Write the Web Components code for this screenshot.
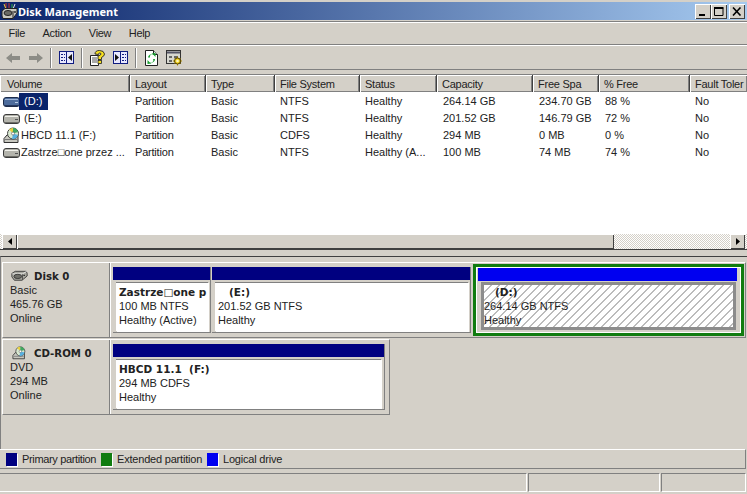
<!DOCTYPE html>
<html><head><meta charset="utf-8"><style>
html,body{margin:0;padding:0;background:#d4d0c8}
body{width:747px;height:494px;overflow:hidden;font:11px "Liberation Sans",Arial,sans-serif;color:#000;display:flex;flex-direction:column}
</style></head><body>
<dm-title>Disk Management</dm-title>
<dm-menu><span>File</span><span>Action</span><span>View</span><span>Help</span></dm-menu>
<dm-toolbar></dm-toolbar>
<dm-list>
<dm-row icon="blue" selected data-c=" (D:)|Partition|Basic|NTFS|Healthy|264.14 GB|234.70 GB|88 %|No"></dm-row>
<dm-row icon="gray" data-c=" (E:)|Partition|Basic|NTFS|Healthy|201.52 GB|146.79 GB|72 %|No"></dm-row>
<dm-row icon="cd" data-c="HBCD 11.1 (F:)|Partition|Basic|CDFS|Healthy|294 MB|0 MB|0 %|No"></dm-row>
<dm-row icon="gray" data-c="Zastrze□one przez ...|Partition|Basic|NTFS|Healthy (A...|100 MB|74 MB|74 %|No"></dm-row>
</dm-list>
<dm-hscroll></dm-hscroll>
<dm-lower>
<dm-disk name="Disk 0" icon="hdd" l1="Basic" l2="465.76 GB" l3="Online">
<dm-part w="98"><b>Zastrze□one p</b><span>100 MB NTFS</span><span>Healthy (Active)</span></dm-part>
<dm-part w="259"><b>&nbsp;&nbsp;&nbsp;(E:)</b><span>201.52 GB NTFS</span><span>Healthy</span></dm-part>
<dm-part w="271" logical><b>&nbsp;&nbsp;&nbsp;(D:)</b><span>264.14 GB NTFS</span><span>Healthy</span></dm-part>
</dm-disk>
<dm-disk name="CD-ROM 0" icon="cd" l1="DVD" l2="294 MB" l3="Online" style="width:388px">
<dm-part w="272" class="wide"><b>HBCD 11.1&nbsp;&nbsp;(F:)</b><span>294 MB CDFS</span><span>Healthy</span></dm-part>
</dm-disk>
</dm-lower>
<dm-legend></dm-legend>
<dm-status></dm-status>
<script>
const ICONS={
blue:`<svg width="18" height="14" viewBox="0 0 18 14"><rect x="0.5" y="2.5" width="16" height="9" rx="2.5" fill="#4d6c9c" stroke="#1d2c4a"/><path d="M2 4.500h13" stroke="#9db4d8"/><path d="M2 10.500h13" stroke="#24365c"/><rect x="12" y="7" width="3" height="1" fill="#b8cbe6"/></svg>`,
gray:`<svg width="18" height="14" viewBox="0 0 18 14"><rect x="0.5" y="2.5" width="16" height="9" rx="2.5" fill="#b4b4ac" stroke="#3c3c3c"/><path d="M2 4.500h13" stroke="#f2f2ec"/><path d="M2 10.500h13" stroke="#6c6c66"/><rect x="12" y="7" width="3" height="1" fill="#555"/></svg>`,
cd:`<svg width="18" height="17" viewBox="0 0 18 17"><path d="M1 11.500 4 8h11v7.500H1z" fill="#c8c8c0" stroke="#333"/><path d="M2 12.500h12" stroke="#777"/><circle cx="10" cy="6.500" r="5.500" fill="#d8e8d0" stroke="#444"/><path d="M10 6.500 6 2.500A5.500 5.500 0 0 1 10 1z" fill="#e8d040"/><path d="M10 6.500 15 5A5.500 5.500 0 0 0 10 1z" fill="#3fa860"/><path d="M10 6.500 9 12A5.500 5.500 0 0 0 15 8z" fill="#58b0e0"/><circle cx="10" cy="6.500" r="1.500" fill="#fff" stroke="#555" stroke-width=".6"/></svg>`,
hdd:`<svg width="20" height="14" viewBox="0 0 20 14"><path d="M1 4 5 1.500h13L19 4v3l-6 5H4L1 8z" fill="#a8a8a0" stroke="#333"/><path d="M1.500 4.500h12l5-3" fill="none" stroke="#eee"/><path d="M13.500 5v6.500" stroke="#444"/><ellipse cx="8" cy="7.500" rx="4.500" ry="2.500" fill="#70706a" stroke="#333"/><rect x="14.500" y="5.500" width="2" height="1.500" fill="#333"/></svg>`,
title:`<svg width="17" height="17" viewBox="0 0 17 17"><path d="M5 0v6M8 0v6" stroke="#d03030" stroke-width="1"/><path d="M11 1v5" stroke="#30b040"/><path d="M3 1l2 5" stroke="#e8d040"/><path d="M14 1l-2 5" stroke="#e8e8e0"/><path d="M1 8 4 5.500h12V10l-4 5.500H2L1 13z" fill="#c8c8c0" stroke="#222"/><ellipse cx="7" cy="10" rx="4" ry="2.500" fill="#6a6a64" stroke="#222"/><path d="M12 8v7" stroke="#222"/><rect x="13" y="8" width="2" height="2" fill="#555"/></svg>`
};
function def(name,css,html,init){customElements.define(name,class extends HTMLElement{
connectedCallback(){if(this.shadowRoot)return;const s=this.attachShadow({mode:'open'});s.innerHTML=`<style>${css}</style>`+(typeof html==='function'?html(this):html);if(init)init(this,s);}});}

def('dm-title',`:host{display:flex;align-items:center;height:18px;margin-top:2px;padding:0 2px 0 1px;background:linear-gradient(90deg,#0a246a,#a6caf0);color:#fff;font:bold 11px "Noto Sans",sans-serif;flex:none}
svg{flex:none;display:block}.t{flex:1}
.b{width:16px;height:15px;background:#d4d0c8;box-shadow:inset 1px 1px #fff,inset -1px -1px #404040;display:flex;align-items:center;justify-content:center;flex:none}`,
()=>`${ICONS.title}<div class="t"><slot></slot></div>
<div class="b"><svg width="10" height="9" viewBox="0 0 10 9"><path d="M1 7h6v2H1z"/></svg></div>
<div class="b"><svg width="10" height="9" viewBox="0 0 10 9"><path d="M.5 1.500h8.500v7h-8.500z" fill="none" stroke="#000"/><path d="M0 1h9.500" stroke="#000" stroke-width="2"/></svg></div>
<div class="b" style="margin-left:2px"><svg width="10" height="9" viewBox="0 0 10 9"><path d="M1 .5 8.500 8.500M8.500.5 1 8.500" stroke="#000" stroke-width="1.600"/></svg></div>`);

def('dm-menu',`:host{display:flex;flex:none;height:22px;margin-top:1px;padding:0 0 0 8.500px;gap:17.500px;align-items:center;border-top:1px solid #808080;box-shadow:inset 0 1px #fff;border-bottom:1px solid #808080;color:#222;letter-spacing:-.3px}
::slotted(span){display:block}`,`<slot></slot>`);

def('dm-toolbar',`:host{display:flex;flex:none;height:23px;align-items:center;border-top:1px solid #fff;border-bottom:1px solid #808080;padding-left:6px}
svg{display:block;flex:none}.s{width:1px;height:20px;background:#808080;border-right:1px solid #fff;flex:none}`,
`<svg width="14" height="12" viewBox="0 0 14 12"><path d="M0 6 6 1v3h8v4H6v3z" fill="#8c8c86"/></svg>
<svg width="14" height="12" viewBox="0 0 14 12" style="margin-left:9px"><path d="M14 6 8 1v3H0v4h8v3z" fill="#8c8c86"/></svg>
<div class="s" style="margin-left:7px"></div>
<svg width="15" height="13" viewBox="0 0 15 13" style="margin-left:7px"><rect x=".5" y=".5" width="14" height="12" fill="#e8e8ff" stroke="#101c80"/><path d="M7.500 1v11" stroke="#101c80"/><path d="M2 3.500h4M2 6.500h4M2 9.500h4" stroke="#101c80" stroke-dasharray="2 1"/><path d="M13 3v7L9 6.500z" fill="#111"/></svg>
<div class="s" style="margin-left:7px"></div>
<svg width="15" height="16" viewBox="0 0 15 16" style="margin-left:7px"><path d="M.5 5.500h8v10h-8z" fill="#fff" stroke="#222"/><path d="M2 8h5M2 10h5M2 12h5" stroke="#555"/><path d="M5 4Q5 .5 9.500 .5T14.500 4Q14.500 6 11.500 7.500V9.500H8V6Q11 5.300 11 4 11 3 9.700 3T8.500 4.500z" fill="#f8e020" stroke="#222" stroke-width=".9"/><rect x="8" y="10.500" width="3.500" height="3" fill="#f8e020" stroke="#222" stroke-width=".8"/></svg>
<svg width="15" height="13" viewBox="0 0 15 13" style="margin-left:8px"><rect x=".5" y=".5" width="14" height="12" fill="#e8e8ff" stroke="#101c80"/><path d="M7.500 1v11" stroke="#101c80"/><path d="M9 3.500h4M9 6.500h4M9 9.500h4" stroke="#101c80" stroke-dasharray="2 1"/><path d="M2 3v7l4-3.500z" fill="#111"/></svg>
<div class="s" style="margin-left:7px"></div>
<svg width="13" height="16" viewBox="0 0 13 16" style="margin-left:8px"><path d="M.5.500h8l4 4v11H.5z" fill="#fff" stroke="#222"/><path d="M8.500.5v4h4" fill="#ddd" stroke="#222"/><path d="M3 7.500A3.500 3.500 0 0 1 8 4.500L6.500 3.500 10.500 3v4L9.300 5.800A2 2 0 0 0 5 7.500z" fill="#18a030"/><path d="M10 9A3.500 3.500 0 0 1 5 12.300L6.500 13.500 2.500 14v-4l1.200 1.200A2 2 0 0 0 8 9z" fill="#18a030"/></svg>
<svg width="17" height="16" viewBox="0 0 17 16" style="margin-left:8px"><rect x=".5" y=".5" width="14" height="13" fill="#d8d8d0" stroke="#333"/><path d="M1 2.500h13" stroke="#556" stroke-width="2"/><path d="M3 6h3v2H3zM8 6h4v2H8zM3 10h3v2H3z" fill="#666"/><path d="M11.500 6.500v9M7 11h9M8.500 8l6 6M14.500 8l-6 6" stroke="#a88800"/><circle cx="11.500" cy="11" r="3" fill="#f0d020" stroke="#554400"/><circle cx="11.500" cy="11" r="1.300" fill="#fff8c0"/></svg>`);

const COLS='130px 76px 69px 85px 77px 96px 66px 91px 57px';
def('dm-list',`:host{display:block;flex:none;height:159px;margin-top:4px;border-top:1px solid #808080;background:#fff;overflow:hidden}
.h{display:grid;grid-template-columns:${COLS};height:17px;margin-bottom:1px;background:#d4d0c8;color:#222;letter-spacing:-.25px}
.h div{box-sizing:border-box;padding:2px 0 0 5px;line-height:14px;white-space:nowrap;overflow:hidden;box-shadow:inset 1px 1px #fff,inset -1px -1px #808080;border-right:1px solid #404040}
.h div:first-child{padding-left:7px}.h div:last-child{border-right:0}.b{display:block}`,
`<div class="h"><div>Volume</div><div>Layout</div><div>Type</div><div>File System</div><div>Status</div><div>Capacity</div><div>Free Spa</div><div>% Free</div><div>Fault Toler</div></div><slot class="b"></slot>`);

def('dm-row',`:host{display:grid;grid-template-columns:${COLS};height:17px;line-height:17px;color:#222;white-space:pre}
.c{padding-left:5px;overflow:hidden}.c.n6{padding-left:6px}.c.p{letter-spacing:-.2px}
.v{display:flex;align-items:center;padding:0 0 0 3px;overflow:hidden}
.v svg{flex:none;display:block}.ic{width:16px;flex:none;display:flex}
.nm{padding:0 6px 0 2px;height:17px}:host([selected]) .nm{background:#0a246a;color:#fff}`,
(e)=>{const c=e.dataset.c.split('|');return `<div class="v"><span class="ic">${ICONS[e.getAttribute('icon')]}</span><span class="nm">${c[0]}</span></div>`+c.slice(1).map((t,i)=>`<div class="c ${i==0?'p':''} ${i==4||i==5||i==6?'n6':''}">${t}</div>`).join('')});

def('dm-hscroll',`:host{display:flex;flex:none;height:15px;padding-left:2px;border-bottom:1px solid #404040;background-image:repeating-conic-gradient(#fff 0 25%,#d4d0c8 0 50%);background-size:2px 2px}
.b,.t{background:#d4d0c8;box-shadow:inset 1px 1px #fff,inset -1px -1px #404040;height:15px;box-sizing:border-box}
.b{width:15px;display:flex;align-items:center;justify-content:center;flex:none}.t{width:597px;flex:none}.g{flex:1}
svg{display:block}`,
`<div class="b"><svg width="4" height="7" viewBox="0 0 4 7"><path d="M4 0v7L0 3.500z"/></svg></div><div class="t"></div><div class="g"></div><div class="b" style="margin-right:2px"><svg width="4" height="7" viewBox="0 0 4 7"><path d="M0 0v7l4-3.500z"/></svg></div>`);

def('dm-lower',`:host{display:flex;flex-direction:column;gap:1px;flex:none;height:193px;margin-top:6px;border-top:1px solid #404040;border-left:1px solid #808080;padding:5px 0 0 1px;box-sizing:border-box}`,`<slot></slot>`);

def('dm-disk',`:host{display:flex;flex:none;height:76px;box-sizing:border-box;width:744px;border-top:1px solid #fff;border-left:1px solid #fff;border-bottom:1px solid #808080;border-right:1px solid #808080;color:#222}
.l{width:107px;flex:none;box-sizing:border-box;padding:5px 0 0 7px;line-height:14px;border-right:1px solid #808080;box-shadow:1px 0 #fff;margin-right:3px}
.n{display:flex;align-items:center;gap:6px;font:bold 10.200px "DejaVu Sans",sans-serif;height:15px;margin-left:1px;color:#222;position:relative;top:.5px}
.n svg{display:block;flex:none;width:17px;height:14px}.s{display:flex;padding-top:4px}`,
(e)=>`<div class="l"><div class="n">${ICONS[e.getAttribute('icon')]}<span>${e.getAttribute('name')}</span></div><div>${e.getAttribute('l1')}</div><div>${e.getAttribute('l2')}</div><div>${e.getAttribute('l3')}</div></div><div class="s"><slot></slot></div>`);

def('dm-part',`:host{display:block;flex:none;box-sizing:border-box;height:66px;margin-right:1px;border-right:1px solid #808080;border-bottom:1px solid #808080}
.h{height:13px;background:#000080}
.x{box-sizing:border-box;height:49px;margin:2px 2px 0 3px;background:#fff;border-top:1px solid #808080;padding:2px 0 0 3px;line-height:14px;overflow:hidden;white-space:nowrap;color:#222;box-shadow:1px 1px #fff}
:host(.wide) .x{margin-right:3px}
::slotted(*){display:block;height:14px}::slotted(b){font:bold 10.500px/14px "DejaVu Sans",sans-serif}
:host([logical]){height:72px;margin:-3px 0 0 1px;border:3px solid #107c10;box-shadow:inset 0 0 0 1px #fff;padding:0 2px 0 2px}
:host([logical]) .h{background:#0000f0;height:13px;margin-top:1px;width:259px}
:host([logical]) .x{margin:1px 0 0 3px;height:48px;width:255px;border:3px solid #8c8c8c;padding:0;box-shadow:none;background:repeating-linear-gradient(135deg,#fff 0 4.700px,#bcbcbc 4.700px 5.660px)}`,
`<div class="h"></div><div class="x"><slot></slot></div>`,(e)=>{e.style.width=e.getAttribute('w')+'px';});

def('dm-legend',`:host{display:flex;align-items:center;flex:none;height:20px;box-sizing:border-box;border-top:1px solid #fff;border-bottom:1px solid #808080;border-right:1px solid #808080;width:746px;padding-left:6px;color:#222;letter-spacing:-.2px}
i{display:block;width:11px;height:13px;box-shadow:1px 1px #fff;margin-right:5px;flex:none}span{margin-right:5px;width:var(--w);white-space:nowrap;flex:none;overflow:visible}`,
`<i style="background:#000080"></i><span style="--w:74px;letter-spacing:-.35px">Primary partition</span><i style="background:#107c10"></i><span style="--w:85px">Extended partition</span><i style="background:#0000f0"></i><span>Logical drive</span>`);

def('dm-status',`:host{display:flex;flex:none;height:19px;margin-top:4px;padding-right:1px}
div{box-sizing:border-box;height:19px;border-top:1px solid #808080;border-left:1px solid #808080;border-bottom:1px solid #fff;border-right:1px solid #fff;margin-right:1px}`,
`<div style="width:527px;border-left:0"></div><div style="width:132px"></div><div style="flex:1;margin-right:0"></div>`);
</script>
</body></html>
